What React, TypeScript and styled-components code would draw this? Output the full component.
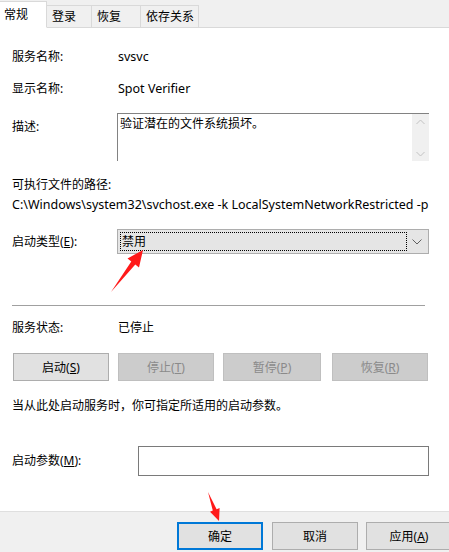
import React from "react";
import styled, { createGlobalStyle } from "styled-components";

const GlobalStyle = createGlobalStyle`
  html, body { margin: 0; padding: 0; background: #ffffff; }
  body {
    font-family: "Noto Sans", "Noto Sans CJK SC", sans-serif;
    font-size: 12px;
    color: #000000;
  }
  * { box-sizing: border-box; }
`;

const Dialog = styled.div`
  position: relative;
  width: 449px;
  height: 552px;
  display: flex;
  flex-direction: column;
  overflow: hidden;
  background: #ffffff;
`;

const TabStrip = styled.div`
  height: 28px;
  flex: none;
  display: flex;
  align-items: flex-end;
  background: #f0f0f0;
  border-bottom: 1px solid #d9d9d9;
`;

const Tab = styled.div<{ $w: number; $active?: boolean }>`
  width: ${(p) => p.$w}px;
  height: ${(p) => (p.$active ? 27 : 23)}px;
  margin-bottom: -1px;
  display: flex;
  align-items: ${(p) => (p.$active ? "flex-start" : "center")};
  padding: ${(p) => (p.$active ? "5px 0 0 4px" : "1px 0 0 5px")};
  background: ${(p) => (p.$active ? "#ffffff" : "#f0f0f0")};
  border: 1px solid #d9d9d9;
  border-left: ${(p) => (p.$active ? "none" : "0")};
  border-bottom: ${(p) => (p.$active ? "1px solid #ffffff" : "1px solid #d9d9d9")};
  line-height: 16px;
  white-space: nowrap;
`;

const Content = styled.div`
  flex: 1;
  display: flex;
  flex-direction: column;
  padding: 0 0 0 12px;
`;

const Row = styled.div<{ $top: number; $align?: string }>`
  display: flex;
  align-items: ${(p) => p.$align || "center"};
  margin-top: ${(p) => p.$top}px;
  line-height: 16px;
  white-space: nowrap;
`;

const Label = styled.div<{ $w?: number; $pt?: number }>`
  width: ${(p) => p.$w ?? 106}px;
  flex: none;
  padding-top: ${(p) => p.$pt ?? 0}px;
`;

const Value = styled.div<{ $latin?: boolean }>`
  font-size: ${(p) => (p.$latin ? "12.5px" : "12px")};
`;

const TextArea = styled.div`
  width: 312px;
  height: 48px;
  display: flex;
  border-top: 1px solid #828282;
  border-left: 1px solid #828282;
`;

const AreaText = styled.div`
  flex: 1;
  padding: 2px 0 0 2px;
`;

const ScrollBar = styled.div`
  width: 17px;
  display: flex;
  flex-direction: column;
  justify-content: space-between;
  align-items: center;
  background: #f0f0f0;
  padding: 5px 0 4px;
`;

const Combo = styled.div`
  width: 312px;
  height: 25px;
  display: flex;
  align-items: center;
  padding: 2px;
  background: #e5e5e5;
  border: 1px solid #adadad;
`;

const FocusRect = styled.div`
  flex: 1;
  height: 100%;
  display: flex;
  align-items: center;
  padding-left: 1px;
  border: 1px dotted #000000;
`;

const ChevronBox = styled.div`
  width: 18px;
  display: flex;
  justify-content: center;
  margin-left: 1px;
`;

const Separator = styled.div`
  width: 413px;
  height: 1px;
  background: #a0a0a0;
  margin-top: 51px;
`;

const ButtonRow = styled.div`
  display: flex;
  margin-top: 17px;
`;

const Button = styled.div<{ $w: number; $ml: number; $disabled?: boolean; $default?: boolean }>`
  width: ${(p) => p.$w}px;
  height: 28px;
  margin-left: ${(p) => p.$ml}px;
  display: flex;
  align-items: center;
  justify-content: center;
  background: ${(p) => (p.$disabled ? "#cccccc" : "#e1e1e1")};
  color: ${(p) => (p.$disabled ? "#8a8a8a" : "#000000")};
  border: ${(p) => (p.$default ? "2px solid #0078d7" : p.$disabled ? "1px solid #bfbfbf" : "1px solid #adadad")};
  white-space: nowrap;
  flex: none;
`;

const Input = styled.div`
  width: 291px;
  height: 30px;
  border: 1px solid #7a7a7a;
  background: #ffffff;
`;

const Footer = styled.div`
  height: 41px;
  flex: none;
  display: flex;
  padding: 10px 0 0 0;
  background: #f0f0f0;
  border-top: 1px solid #dfdfdf;
`;

const Overlay = styled.svg`
  position: absolute;
  left: 0;
  top: 0;
  width: 449px;
  height: 552px;
  pointer-events: none;
`;

const Chevron = ({ up }: { up?: boolean }) => (
  <svg width="9" height="6" viewBox="0 0 9 6">
    <path d={up ? "M0.5 5 L4.5 1 L8.5 5" : "M0.5 1 L4.5 5 L8.5 1"} fill="none" stroke="#c2c2c2" strokeWidth="1" />
  </svg>
);

export default function App() {
  return (
    <Dialog>
      <GlobalStyle />
      <TabStrip>
        <Tab $w={47} $active>常规</Tab>
        <Tab $w={45}>登录</Tab>
        <Tab $w={49}>恢复</Tab>
        <Tab $w={58}>依存关系</Tab>
      </TabStrip>
      <Content>
        <Row $top={21}>
          <Label>服务名称:</Label>
          <Value $latin>svsvc</Value>
        </Row>
        <Row $top={16}>
          <Label>显示名称:</Label>
          <Value $latin>Spot Verifier</Value>
        </Row>
        <Row $top={16} $align="flex-start">
          <Label $w={105} $pt={6}>描述:</Label>
          <TextArea>
            <AreaText>验证潜在的文件系统损坏。</AreaText>
            <ScrollBar>
              <Chevron up />
              <Chevron />
            </ScrollBar>
          </TextArea>
        </Row>
        <Row $top={16}>
          <Label>可执行文件的路径:</Label>
        </Row>
        <Row $top={4}>
          <Value $latin>C:\Windows\system32\svchost.exe -k LocalSystemNetworkRestricted -p</Value>
        </Row>
        <Row $top={16}>
          <Label $w={105}>
            启动类型(<u>E</u>):
          </Label>
          <Combo>
            <FocusRect>禁用</FocusRect>
            <ChevronBox>
              <svg width="10" height="6" viewBox="0 0 10 6">
                <path d="M0.5 0.5 L5 5 L9.5 0.5" fill="none" stroke="#606060" strokeWidth="1" />
              </svg>
            </ChevronBox>
          </Combo>
        </Row>
        <Separator />
        <Row $top={14}>
          <Label>服务状态:</Label>
          <Value>已停止</Value>
        </Row>
        <ButtonRow>
          <Button $w={96} $ml={1}>
            启动(<u>S</u>)
          </Button>
          <Button $w={96} $ml={9} $disabled>
            停止(<u>T</u>)
          </Button>
          <Button $w={98} $ml={9} $disabled>
            暂停(<u>P</u>)
          </Button>
          <Button $w={96} $ml={11} $disabled>
            恢复(<u>R</u>)
          </Button>
        </ButtonRow>
        <Row $top={17}>
          <Value>当从此处启动服务时，你可指定所适用的启动参数。</Value>
        </Row>
        <Row $top={32}>
          <Label $w={126}>
            启动参数(<u>M</u>):
          </Label>
          <Input />
        </Row>
      </Content>
      <Footer>
        <Button $w={86} $ml={177} $default>确定</Button>
        <Button $w={86} $ml={9}>取消</Button>
        <Button $w={86} $ml={8}>
          应用(<u>A</u>)
        </Button>
      </Footer>
      <Overlay viewBox="0 0 449 552">
        <polygon
          points="143,250 139,267.5 135.3,264.5 111,292 131.3,261.5 127.5,258.5"
          fill="#ff1a1a"
        />
        <polygon
          points="219,521 219.6,508 216.6,509.3 208,492 212.8,510.6 210,511.8"
          fill="#ff1a1a"
        />
      </Overlay>
    </Dialog>
  );
}
